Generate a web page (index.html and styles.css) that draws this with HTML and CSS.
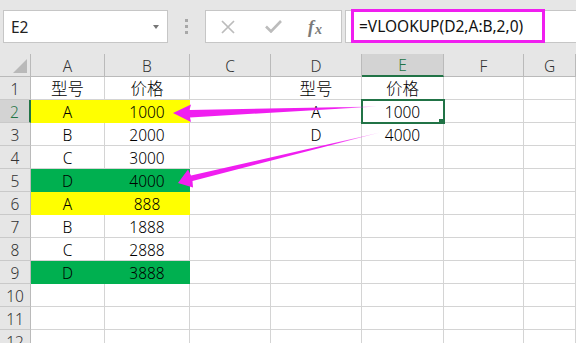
FILE: index.html
```
<!DOCTYPE html>
<html lang="zh-CN">
<head>
<meta charset="utf-8">
<title>VLOOKUP</title>
<link rel="stylesheet" href="styles.css">
</head>
<body>
<div class="app">
  <div class="toolbar">
    <div class="namebox"><span>E2</span><span class="caret"></span></div>
    <div class="grip"><i></i><i></i><i></i></div>
    <div class="fnbox">
      <svg class="ico-x" width="14" height="14" viewBox="0 0 14 14"><path d="M1 1L13 13M13 1L1 13" stroke="#bcbcbc" stroke-width="1.7" fill="none"/></svg>
      <svg class="ico-ok" width="17" height="13" viewBox="0 0 17 13"><path d="M1 6.5L6 11.5L16 1" stroke="#bcbcbc" stroke-width="2.6" fill="none"/></svg>
      <span class="fx"><i>f</i><i class="fxx">x</i></span>
    </div>
    <div class="formula"><span class="hl">=VLOOKUP(D2,A:B,2,0)</span></div>
  </div>

  <div class="sheet">
    <div class="c h corner"></div><div class="c h">A</div><div class="c h">B</div><div class="c h">C</div><div class="c h">D</div><div class="c h hsel">E</div><div class="c h">F</div><div class="c h">G</div>

    <div class="c h rh">1</div><div class="c zh">型号</div><div class="c zh">价格</div><div class="c"></div><div class="c zh">型号</div><div class="c zh">价格</div><div class="c"></div><div class="c"></div>
    <div class="c h rh rsel">2</div><div class="c y">A</div><div class="c y">1000</div><div class="c"></div><div class="c">A</div><div class="c sel">1000</div><div class="c"></div><div class="c"></div>
    <div class="c h rh">3</div><div class="c">B</div><div class="c">2000</div><div class="c"></div><div class="c">D</div><div class="c">4000</div><div class="c"></div><div class="c"></div>
    <div class="c h rh">4</div><div class="c">C</div><div class="c">3000</div><div class="c"></div><div class="c"></div><div class="c"></div><div class="c"></div><div class="c"></div>
    <div class="c h rh">5</div><div class="c g">D</div><div class="c g">4000</div><div class="c"></div><div class="c"></div><div class="c"></div><div class="c"></div><div class="c"></div>
    <div class="c h rh">6</div><div class="c y">A</div><div class="c y">888</div><div class="c"></div><div class="c"></div><div class="c"></div><div class="c"></div><div class="c"></div>
    <div class="c h rh">7</div><div class="c">B</div><div class="c">1888</div><div class="c"></div><div class="c"></div><div class="c"></div><div class="c"></div><div class="c"></div>
    <div class="c h rh">8</div><div class="c">C</div><div class="c">2888</div><div class="c"></div><div class="c"></div><div class="c"></div><div class="c"></div><div class="c"></div>
    <div class="c h rh">9</div><div class="c g">D</div><div class="c g">3888</div><div class="c"></div><div class="c"></div><div class="c"></div><div class="c"></div><div class="c"></div>
    <div class="c h rh">10</div><div class="c"></div><div class="c"></div><div class="c"></div><div class="c"></div><div class="c"></div><div class="c"></div><div class="c"></div>
    <div class="c h rh">11</div><div class="c"></div><div class="c"></div><div class="c"></div><div class="c"></div><div class="c"></div><div class="c"></div><div class="c"></div>
    <div class="c h rh">12</div><div class="c"></div><div class="c"></div><div class="c"></div><div class="c"></div><div class="c"></div><div class="c"></div><div class="c"></div>
  </div>

  <svg class="arrows" width="576" height="343" viewBox="0 0 576 343">
    <defs>
      <linearGradient id="fade1" x1="173" y1="0" x2="377" y2="0" gradientUnits="userSpaceOnUse">
        <stop offset="0" stop-color="#f01ef0"/>
        <stop offset="0.8" stop-color="#f01ef0"/>
        <stop offset="1" stop-color="#f01ef0" stop-opacity="0.35"/>
      </linearGradient>
      <linearGradient id="fade2" x1="178" y1="183" x2="380" y2="132" gradientUnits="userSpaceOnUse">
        <stop offset="0" stop-color="#f01ef0"/>
        <stop offset="0.75" stop-color="#f01ef0"/>
        <stop offset="1" stop-color="#f01ef0" stop-opacity="0.3"/>
      </linearGradient>
    </defs>
    <polygon points="173,113 191,104.5 189.5,110 377,106.5 190,117.5 191,122" fill="url(#fade1)"/>
    <polygon points="178,183 188,169.5 191,175.5 380,132.5 192.5,181 193,187.5" fill="url(#fade2)"/>
  </svg>
</div>
</body>
</html>
```

FILE: styles.css
```
html, body {
  margin: 0;
  padding: 0;
}

body {
  width: 576px;
  height: 343px;
  overflow: hidden;
  background: #ffffff;
  font-family: "Noto Sans", "Noto Sans CJK SC", sans-serif;
}

.app {
  position: relative;
  width: 576px;
  height: 343px;
  overflow: hidden;
}

/* ---------- formula bar ---------- */
.toolbar {
  height: 54px;
  box-sizing: border-box;
  padding-top: 10px;
  background: #e6e6e6;
  display: flex;
  align-items: flex-start;
}

.namebox {
  margin-left: 3px;
  width: 165px;
  height: 33px;
  box-sizing: border-box;
  background: #fff;
  border: 1px solid #c6c6c6;
  display: flex;
  align-items: center;
  justify-content: space-between;
  padding: 0 8px 0 7px;
  font-size: 15.5px;
  color: #222;
}

.caret {
  width: 0;
  height: 0;
  border-left: 3.5px solid transparent;
  border-right: 3.5px solid transparent;
  border-top: 4px solid #767676;
}

.grip {
  margin-left: 17px;
  margin-top: 9px;
  display: flex;
  flex-direction: column;
  gap: 3px;
}

.grip i {
  display: block;
  width: 3px;
  height: 3px;
  background: #a8a8a8;
}

.fnbox {
  margin-left: 17px;
  width: 137px;
  height: 33px;
  box-sizing: border-box;
  background: #fff;
  border: 1px solid #c6c6c6;
  display: flex;
  align-items: center;
}

.ico-x {
  margin-left: 15px;
}

.ico-ok {
  margin-left: 30px;
}

.fx {
  margin-left: 26px;
  font-family: "Liberation Serif", serif;
  font-size: 18px;
  font-weight: bold;
  color: #7a7a7a;
  line-height: 1;
}

.fxx {
  font-size: 14px;
  position: relative;
  top: 1px;
  margin-left: 1px;
}

.formula {
  margin-left: 3px;
  flex: 1;
  height: 33px;
  box-sizing: border-box;
  background: #fff;
  border: 1px solid #c6c6c6;
  border-right: none;
}

.hl {
  display: flex;
  align-items: center;
  box-sizing: border-box;
  width: 194px;
  height: 34px;
  margin: -2px 0 0 5px;
  border: 3px solid #f01ef0;
  padding-left: 5px;
  font-size: 15.5px;
  color: #111;
  white-space: nowrap;
}

/* ---------- grid ---------- */
.sheet {
  display: grid;
  grid-template-columns: 31px 74px 85px 81px 91px 82px 80px 1fr;
  grid-auto-rows: 23px;
  font-size: 15.5px;
  font-weight: 300;
}

.c {
  box-sizing: border-box;
  border-right: 1px solid #d4d4d4;
  border-bottom: 1px solid #d4d4d4;
  display: flex;
  align-items: flex-end;
  justify-content: center;
  line-height: 20px;
  color: #000;
  white-space: nowrap;
}

.zh {
  font-size: 16.5px;
}

.h {
  background: #e6e6e6;
  color: #333;
  border-right-color: #bababa;
  border-bottom-color: #bababa;
}

.rh {
  border-bottom-color: #c9c9c9;
}

.corner {
  position: relative;
}

.corner::after {
  content: "";
  position: absolute;
  left: 13px;
  top: 5px;
  width: 14px;
  height: 14px;
  background: #b9b9b9;
  clip-path: polygon(100% 0, 100% 100%, 0 100%);
}

.hsel {
  background: #d3d3d3;
  color: #217346;
  border-bottom: 2px solid #217346;
}

.rsel {
  background: #d3d3d3;
  color: #217346;
  border-right: 2px solid #217346;
}

.y {
  background: #ffff00;
  border-color: #ffff00;
}

.g {
  background: #00b050;
  border-color: #00b050;
}

.sel {
  position: relative;
  outline: 2px solid #217346;
  outline-offset: -1px;
}

.sel::after {
  content: "";
  position: absolute;
  right: -1px;
  bottom: -2px;
  width: 5px;
  height: 5px;
  background: #217346;
}

/* ---------- annotation arrows ---------- */
.arrows {
  position: absolute;
  left: 0;
  top: 0;
  pointer-events: none;
}
```
